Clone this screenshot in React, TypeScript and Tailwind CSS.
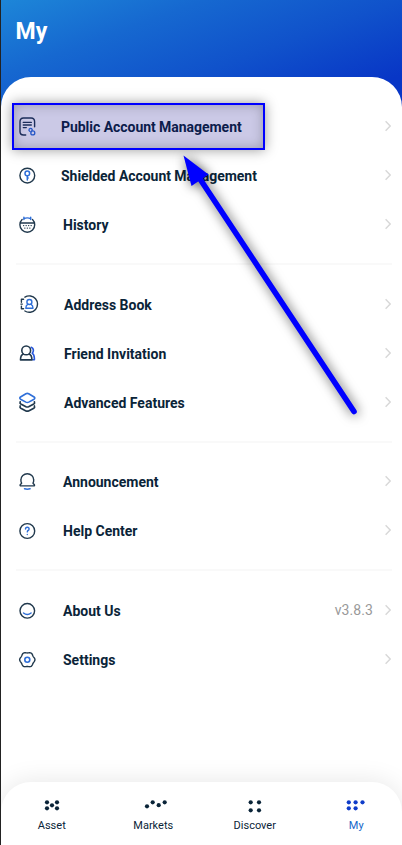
import type { ReactNode } from 'react';

interface MenuItem {
  label: string;
  icon: ReactNode;
  value?: string;
  labelClass: string;
}

interface Tab {
  label: string;
  dots: number[][];
  active?: boolean;
}

const NAVY = '#21394d';
const BLUE = '#2f6fd8';

// six-lobed outline of the settings icon
const gearPoints = Array.from({ length: 72 }, (_, i) => {
  const angle = (i * Math.PI) / 36;
  const radius = 7.2 + 0.45 * Math.cos(6 * angle);
  return `${(10 + radius * Math.cos(angle)).toFixed(2)},${(9.7 + radius * Math.sin(angle)).toFixed(2)}`;
}).join(' ');

function Icon({ children }: { children: ReactNode }) {
  return (
    <svg width="20" height="20" viewBox="0 0 20 20" fill="none" stroke={NAVY} strokeWidth="1.4" strokeLinecap="round" strokeLinejoin="round" className="shrink-0 overflow-visible">
      {children}
    </svg>
  );
}

const sections: MenuItem[][] = [
  [
    {
      label: 'Public Account Management',
      labelClass: 'ml-6 tracking-[-0.04px]',
      icon: (
        <Icon>
          <path d="M8.7 18H6.5Q3 18 3 14.5V4.8Q3 1 6.5 1h7.6Q17.6 1 17.6 4.8V9.7" />
          <path d="M6.3 5.4h8M6.3 8h8M6.3 10.6h3" />
          <g stroke={BLUE} strokeWidth="1.3">
            <path d="M12.7 14.3q-1.3-.9-.5-2.2 1-1.2 2.3-.5 1.3 1 .4 2.3l-.8.9" />
            <circle cx="15.8" cy="15.9" r="2" />
          </g>
        </Icon>
      ),
    },
    {
      label: 'Shielded Account Management',
      labelClass: 'ml-6 tracking-[-0.04px]',
      icon: (
        <Icon>
          <circle cx="10.3" cy="9.6" r="7.4" />
          <g stroke={BLUE} strokeWidth="1.5">
            <circle cx="10.3" cy="7.4" r="2.3" />
            <path d="M10.3 9.9v4.2M10.3 12h.9" />
          </g>
        </Icon>
      ),
    },
    {
      label: 'History',
      labelClass: 'ml-[26px]',
      icon: (
        <Icon>
          <path d="M5.1 4.6A7.4 7.4 0 1 0 15.5 4.6M3.2 8h14.2" />
          <path d="M6.7 3.8Q10.3 2 13.9 3.8M6.9 2.2v2.4M13.7 2.2v2.4" stroke={BLUE} />
          <path d="M6.6 10.6h.1M9.1 10.6h.1M11.6 10.6h.1M14.1 10.6h.1M7.8 13.1h.1M10.3 13.1h.1M12.8 13.1h.1" />
        </Icon>
      ),
    },
  ],
  [
    {
      label: 'Address Book',
      labelClass: 'ml-[27px]',
      icon: (
        <Icon>
          <g transform="translate(1 0)">
            <path d="M6.9 2.2A8.2 8.2 0 1 1 6.9 16M5.6 4.2H3.4v3M5.6 13.8H3.4v-2.6M2.9 9.1h1.4" />
            <g stroke={BLUE}>
              <circle cx="11.4" cy="7" r="2.5" />
              <path d="M9.7 9.3q-1.9.9-1.9 4H15q0-3.1-1.9-4" />
            </g>
          </g>
        </Icon>
      ),
    },
    {
      label: 'Friend Invitation',
      labelClass: 'ml-[27px]',
      icon: (
        <Icon>
          <path d="M14.2 3.2q2.2.8 2.2 3.3 0 1.5-1.2 2.7 2.1 1.4 2.2 5.4v1.2h-1.6" stroke="#2858db" strokeWidth="1.6" />
          <circle cx="9.2" cy="6.4" r="4.4" strokeWidth="1.6" />
          <path d="M6.2 10.1q-2.7 1.2-2.7 5.8h11.4q0-4.6-2.7-5.8" strokeWidth="1.6" />
        </Icon>
      ),
    },
    {
      label: 'Advanced Features',
      labelClass: 'ml-[27px]',
      icon: (
        <Icon>
          <g transform="translate(.3 -.6)">
            <path d="M2.9 9.4q-.6 1.6.6 2.3l5.2 2.6q1.3.6 2.6 0l5.2-2.6q1.2-.7.6-2.3M2.9 13.6q-.6 1.6.6 2.3l5.2 2.6q1.3.6 2.6 0l5.2-2.6q1.2-.7.6-2.3" strokeWidth="1.7" />
            <path d="m3.2 4.6 5.4-3.3q1.4-.7 2.8 0l5.4 3.3q1.4 1.1 0 2.2l-5.4 2.9q-1.4.7-2.8 0L3.2 6.8q-1.4-1.1 0-2.2Z" stroke={BLUE} strokeWidth="1.6" />
          </g>
        </Icon>
      ),
    },
  ],
  [
    {
      label: 'Announcement',
      labelClass: 'ml-[26px]',
      icon: (
        <Icon>
          <path d="M4.6 11.2Q3.8 9.8 3.9 7.9a6.4 6.2 0 0 1 12.8 0q.1 1.9-.7 3.3l1.4 1.6q.5 1.1-.8 1.1H4q-1.3 0-.8-1.1Z" />
          <path d="M7.5 16.7q2.8.9 5.6 0" stroke={BLUE} strokeWidth="1.5" />
        </Icon>
      ),
    },
    {
      label: 'Help Center',
      labelClass: 'ml-[26px]',
      icon: (
        <Icon>
          <circle cx="10.3" cy="10" r="7.4" />
          <path d="M8.5 8q0-1.8 1.8-1.8T12.1 8q0 1-1 1.5-.8.4-.8 1.4M10.3 13.5v.1" stroke={BLUE} />
        </Icon>
      ),
    },
  ],
  [
    {
      label: 'About Us',
      labelClass: 'ml-[26px]',
      value: 'v3.8.3',
      icon: (
        <Icon>
          <circle cx="10.3" cy="9.8" r="7.3" />
          <path d="M6.5 12q3.8 3.2 7.6 0" stroke={BLUE} />
        </Icon>
      ),
    },
    {
      label: 'Settings',
      labelClass: 'ml-[26px]',
      icon: (
        <Icon>
          <g transform="translate(.3 0)">
            <polygon points={gearPoints} />
            <circle cx="10" cy="9.7" r="2.5" stroke={BLUE} strokeWidth="1.6" />
          </g>
        </Icon>
      ),
    },
  ],
];

const tabs: Tab[] = [
  { label: 'Asset', dots: [[5, 5.3], [15, 5.3], [10, 8.3], [5, 11.3], [15, 11.3]] },
  { label: 'Markets', dots: [[4, 9.3], [9.7, 5.3], [15.7, 8.2], [21.7, 5.3]] },
  { label: 'Discover', dots: [[5.7, 5.3], [14, 5.3], [5.7, 13.3], [14, 13.3]] },
  { label: 'My', dots: [[2.8, 5.3], [9.6, 5.3], [16.5, 5.3], [2.8, 11.3], [9.6, 11.3]], active: true },
];

function Chevron() {
  return (
    <svg width="6" height="12" viewBox="0 0 6 12" fill="none" stroke="#d8d8d8" strokeWidth="1.4" className="relative -top-px ml-[12px]">
      <path d="m.6 1.2 4.6 4.8-4.6 4.8" />
    </svg>
  );
}

function MenuRow({ item }: { item: MenuItem }) {
  return (
    <li className="flex h-[49.2px] items-center pl-4 pr-[11px]">
      {item.icon}
      <span className={`text-[14px] font-bold leading-5 whitespace-nowrap ${item.labelClass}`}>{item.label}</span>
      <span className="ml-auto text-[14px] tracking-[0.1px] text-[#999]">{item.value}</span>
      <Chevron />
    </li>
  );
}

function App() {
  return (
    <div className="relative flex h-[845px] w-full flex-col overflow-hidden border-l border-[#222] bg-[linear-gradient(160deg,#1d86d8_0px,#1668d0_70px,#1052cb_137px,#0836c6_208px)] font-[Roboto,sans-serif] text-[#0a2438]">
      {/* Header */}
      <header className="h-[76.5px] shrink-0 pl-[14.5px] pt-[16px]">
        <h1 className="text-[23px] font-bold leading-8 text-white">My</h1>
      </header>

      {/* Menu */}
      <main className="flex-1 rounded-t-[30px] bg-white pt-[26px]">
        {sections.map((section, index) => (
          <div key={index}>
            {index > 0 && (
              <div className="h-[30px] pl-[15px] pr-[10px] pt-[13px]">
                <div className="h-[2px] bg-[#f9f9f9]" />
              </div>
            )}
            <ul>
              {section.map((item) => (
                <MenuRow key={item.label} item={item} />
              ))}
            </ul>
          </div>
        ))}
      </main>

      {/* Tab bar */}
      <div className="shrink-0 bg-white">
        <nav className="h-[63px] rounded-t-[30px] bg-white pt-[15px] shadow-[0_0_26px_rgba(0,0,0,0.10)]">
          <div className="-mr-[5px] grid grid-cols-4">
            {tabs.map((tab) => (
              <div key={tab.label} className={`flex flex-col items-center ${tab.active ? 'text-[#1767c9]' : ''}`}>
                <svg width="20" height="18" viewBox="0 0 20 18" fill={tab.active ? '#0f3cc9' : '#0a2438'} overflow="visible">
                  {tab.dots.map(([x, y]) => (
                    <circle key={`${x}-${y}`} cx={x} cy={y} r="2.1" />
                  ))}
                </svg>
                <span className="mt-[3px] text-[11px] leading-4">{tab.label}</span>
              </div>
            ))}
          </div>
        </nav>
      </div>

      {/* Highlight and arrow over the menu */}
      <div className="absolute left-[11px] top-[103px] h-[47px] w-[253px] border-2 border-[#00f] bg-[rgba(20,10,140,0.22)] shadow-[0_0_12px_rgba(0,0,0,0.4),inset_0_0_12px_rgba(0,0,0,0.25)]" />
      <svg className="absolute left-[-1px] top-0 drop-shadow-[1px_1px_6px_rgba(0,0,0,0.7)]" width="402" height="845" fill="#00f">
        <path d="M200 179 354 411.5" stroke="#00f" strokeWidth="5.6" strokeLinecap="round" />
        <path d="m183.5 155.5 25 19-17 11.5Z" />
      </svg>
    </div>
  );
}

export default App;
